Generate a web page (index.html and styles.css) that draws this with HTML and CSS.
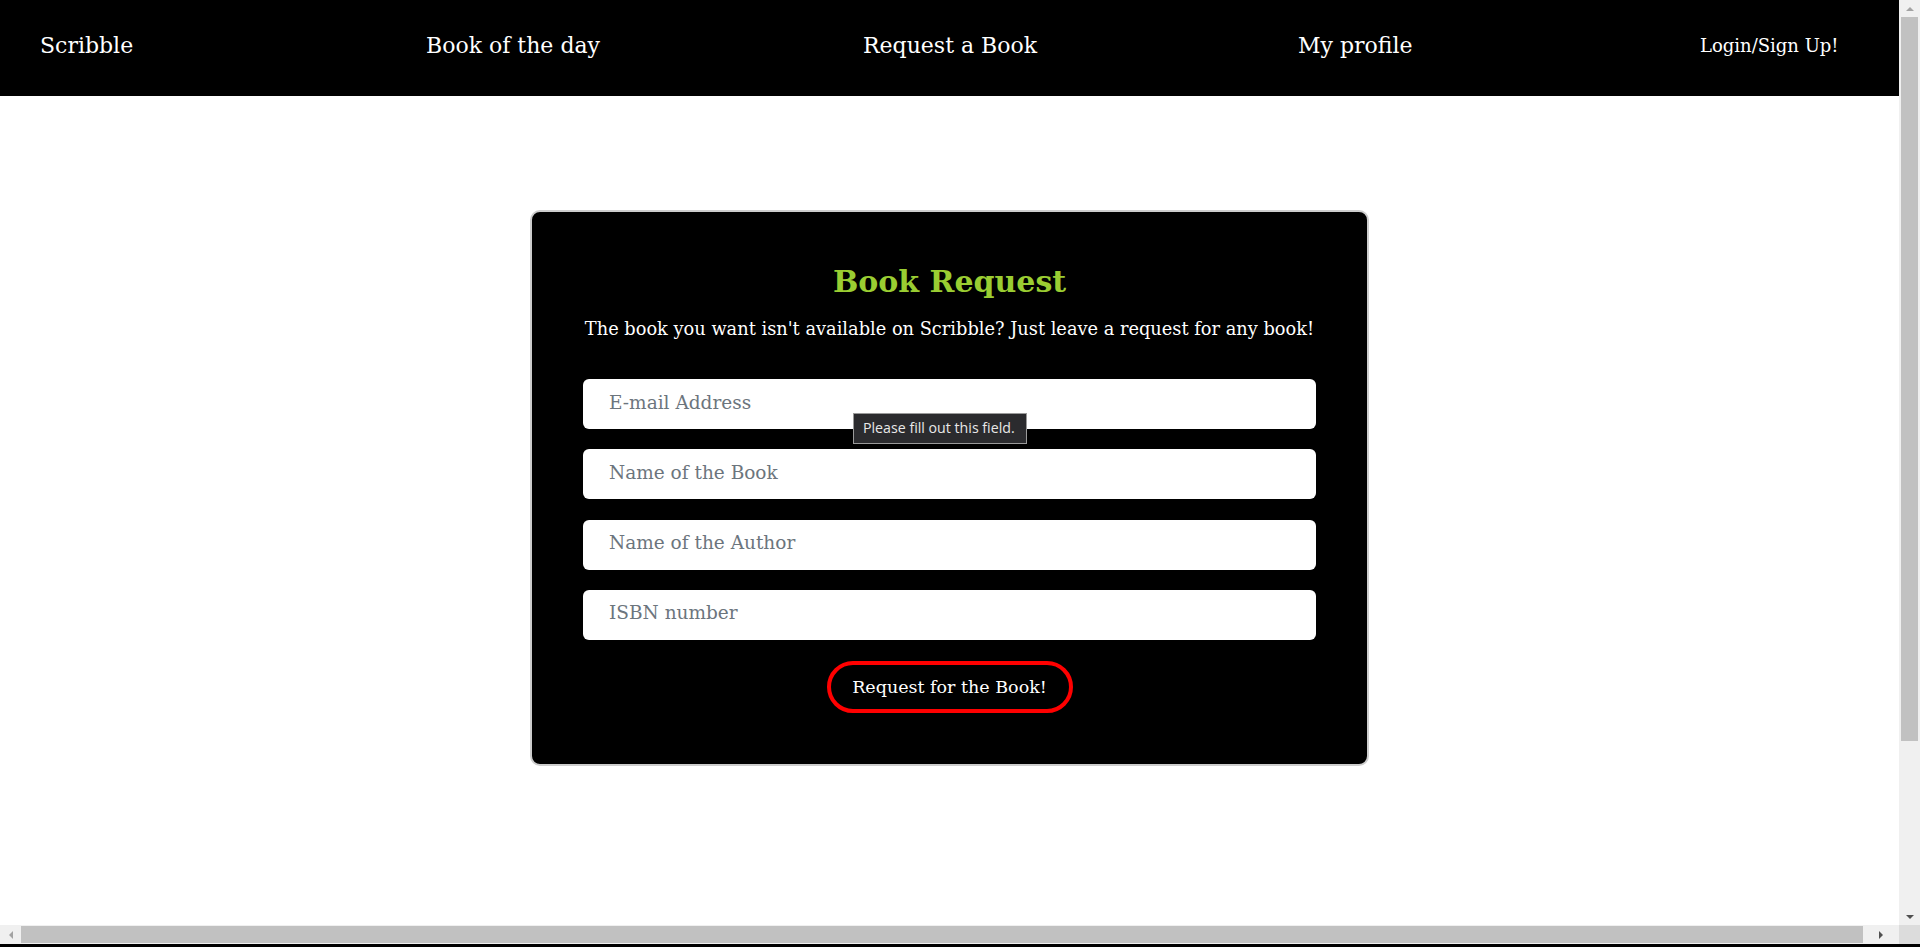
FILE: index.html
```html
<!DOCTYPE html>
<html lang="en">
<head>
<meta charset="utf-8">
<title>Scribble - Request a Book</title>
<link rel="stylesheet" href="styles.css">
</head>
<body>
<div class="page">
  <nav class="topnav">
    <a class="nav-item" href="#">Scribble</a>
    <a class="nav-item" href="#">Book of the day</a>
    <a class="nav-item" href="#">Request a Book</a>
    <a class="nav-item" href="#">My profile</a>
    <a class="nav-item login" href="#">Login/Sign Up!</a>
  </nav>
  <main class="content">
    <form class="card">
      <h1 class="card-title">Book Request</h1>
      <p class="card-sub">The book you want isn't available on Scribble? Just leave a request for any book!</p>
      <div class="fields">
        <div class="field-wrap">
          <input class="field" type="email" placeholder="E-mail Address">
          <div class="tip">Please fill out this field.</div>
        </div>
        <input class="field" type="text" placeholder="Name of the Book">
        <input class="field" type="text" placeholder="Name of the Author">
        <input class="field" type="text" placeholder="ISBN number">
      </div>
      <button class="submit" type="button">Request for the Book!</button>
    </form>
  </main>
</div>
<div class="vscroll" aria-hidden="true">
  <div class="sb-arrow up"></div>
  <div class="vthumb"></div>
  <div class="sb-arrow down"></div>
</div>
<div class="hscroll" aria-hidden="true">
  <div class="sb-arrow left"></div>
  <div class="hthumb"></div>
  <div class="sb-arrow right"></div>
</div>
<div class="sb-corner" aria-hidden="true"></div>
<div class="sb-edge" aria-hidden="true"></div>
</body>
</html>
```
FILE: styles.css
```css
html, body {
  margin: 0;
  padding: 0;
}
body {
  background: #fff;
  font-family: "DejaVu Serif", "Liberation Serif", serif;
}
.page {
  width: 1927px;
  min-height: 1151px;
}
.topnav {
  height: 96px;
  background: #000;
  display: grid;
  grid-template-columns: 386px 437px 435px 402px auto;
  align-items: center;
  padding: 0 0 4px 40px;
  box-sizing: border-box;
}
.nav-item {
  color: #fff;
  text-decoration: none;
  font-size: 22px;
  line-height: 1;
  justify-self: start;
}
.nav-item.login {
  font-size: 18px;
}
.content {
  display: flex;
  padding-top: 114px;
  padding-left: 530px;
}
.card {
  width: 839px;
  box-sizing: border-box;
  background: #000;
  border: 2px solid #cdcdcd;
  border-radius: 10px;
  padding: 50px 51px 51px;
  display: flex;
  flex-direction: column;
  align-items: center;
}
.card-title {
  margin: 0;
  color: #9acd32;
  font-size: 30px;
  line-height: 40px;
  font-weight: bold;
}
.card-sub {
  margin: 15px 0 0;
  color: #fff;
  font-size: 17.8px;
  line-height: 24px;
  white-space: nowrap;
}
.fields {
  margin-top: 38px;
  width: 100%;
  display: flex;
  flex-direction: column;
  gap: 20.33px;
}
.field-wrap {
  position: relative;
}
.field {
  display: block;
  width: 100%;
  height: 50px;
  box-sizing: border-box;
  border: none;
  border-radius: 6px;
  background: #fff;
  padding: 0 26px 4px;
  font-family: "DejaVu Serif", serif;
  font-size: 18.5px;
  color: #212529;
  outline: none;
}
.field::placeholder {
  color: #6c757d;
}
.tip {
  position: absolute;
  left: 270px;
  top: 34px;
  width: 174px;
  height: 31px;
  box-sizing: border-box;
  background: #2b2b2e;
  border: 1px solid #9a9a9a;
  color: #e8e8e8;
  font-family: "Open Sans", "Noto Sans", sans-serif;
  font-size: 14.2px;
  line-height: 28px;
  padding-left: 9px;
  white-space: nowrap;
}
.submit {
  margin-top: 21px;
  width: 246px;
  height: 52px;
  box-sizing: border-box;
  background: #000;
  color: #fff;
  border: 4px solid #ff0000;
  border-radius: 26px;
  font-family: "DejaVu Serif", serif;
  font-size: 17.5px;
  padding: 0;
  cursor: pointer;
}

/* browser scrollbars as seen in the capture */
.vscroll {
  position: fixed;
  top: 0;
  right: 0;
  width: 21px;
  height: 925px;
  background: #f0f0f0;
  display: flex;
  flex-direction: column;
  align-items: center;
}
.vthumb {
  width: 17px;
  height: 724px;
  background: #c1c1c1;
}
.hscroll {
  position: fixed;
  left: 0;
  bottom: 3px;
  width: 1899px;
  height: 19px;
  background: #f0f0f0;
  display: flex;
  align-items: center;
}
.hthumb {
  height: 17px;
  width: 1842px;
  background: #c1c1c1;
}
.sb-arrow {
  flex: none;
  display: flex;
  align-items: center;
  justify-content: center;
  width: 21px;
  height: 17px;
}
.sb-arrow::after {
  content: "";
  width: 0;
  height: 0;
}
.sb-arrow.up::after {
  border-left: 4px solid transparent;
  border-right: 4px solid transparent;
  border-bottom: 4px solid #a3a3a3;
}
.sb-arrow.down {
  margin-top: auto;
}
.sb-arrow.down::after {
  border-left: 4px solid transparent;
  border-right: 4px solid transparent;
  border-top: 4px solid #505050;
}
.sb-arrow.left::after {
  border-top: 4px solid transparent;
  border-bottom: 4px solid transparent;
  border-right: 4px solid #a3a3a3;
}
.sb-arrow.right {
  width: 36px;
  margin-left: auto;
}
.sb-arrow.right::after {
  border-top: 4px solid transparent;
  border-bottom: 4px solid transparent;
  border-left: 4px solid #505050;
}
.sb-corner {
  position: fixed;
  right: 0;
  bottom: 3px;
  width: 21px;
  height: 19px;
  background: #dcdcdc;
}
.sb-edge {
  position: fixed;
  left: 0;
  bottom: 0;
  width: 100%;
  height: 3px;
  background: #000;
}
```
